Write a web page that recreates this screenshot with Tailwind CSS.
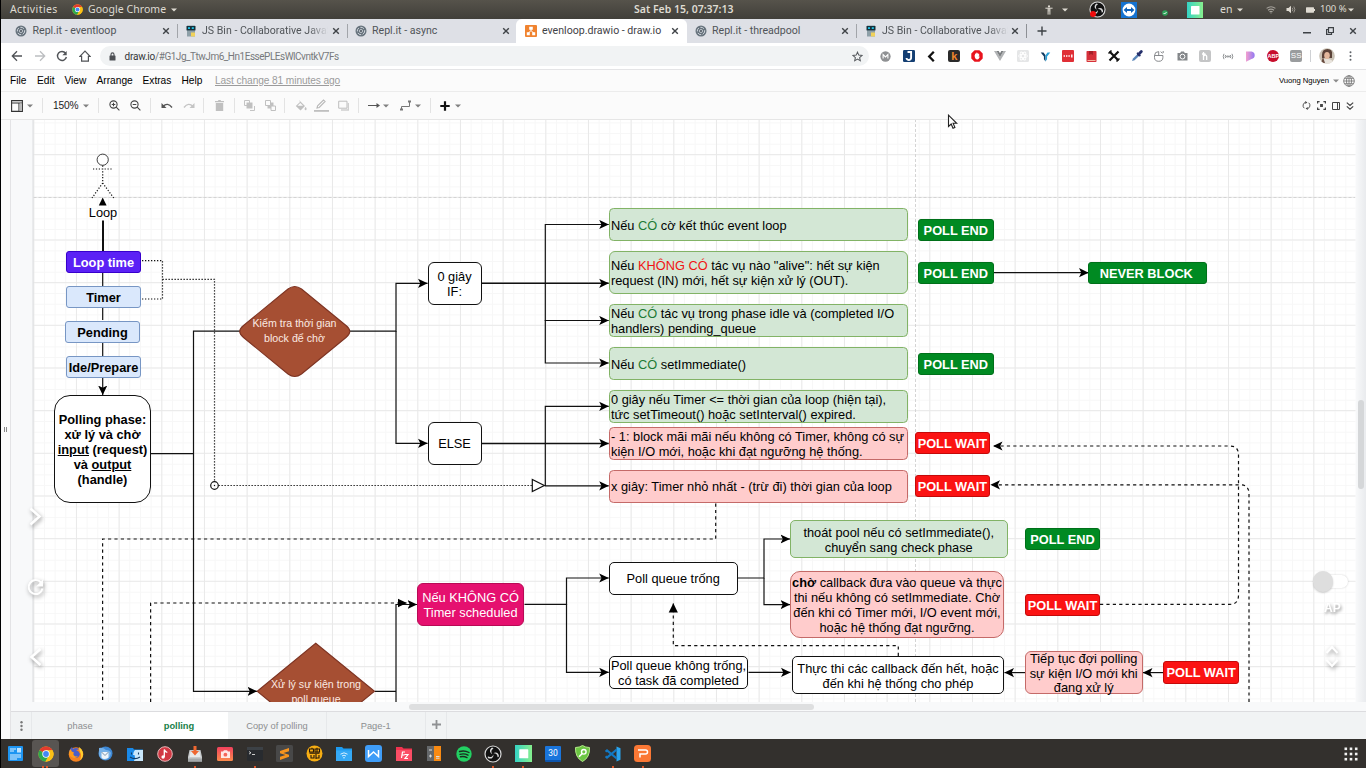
<!DOCTYPE html>
<html lang="vi">
<head>
<meta charset="utf-8">
<title>evenloop.drawio - draw.io</title>
<script src="https://cdn.jsdelivr.net/npm/@tailwindcss/browser@4"></script>
</head>
<body class="w-[1366px] h-[768px] overflow-hidden bg-[#fbfbfb] font-['Liberation_Sans',Arial,sans-serif]">
<svg class="absolute size-0" aria-hidden="true">
  <defs>
    <symbol id="repl" viewBox="0 0 12 12"><circle cx="6" cy="6" r="5.5" fill="#66727c"/><circle cx="6" cy="6" r="3.7" fill="none" stroke="#cfd5dc" stroke-width="1" stroke-dasharray="4 1.4"/><circle cx="6" cy="6" r="1.8" fill="#e5e9ee"/><circle cx="6" cy="6" r="1" fill="#3b4650"/></symbol>
    <symbol id="jsbin" viewBox="0 0 12 12"><rect x="2" y=".5" width="8" height="11" fill="#8ea0a8"/><rect x="1.500" y="1" width="9" height="4.400" fill="#17303b"/><rect x="3" y="2.200" width="2" height="1.800" fill="#20c5e8"/><rect x="6.800" y="2.200" width="2" height="1.800" fill="#20c5e8"/><rect x="6" y="7.500" width="4" height="4" fill="#f1d25a"/></symbol>
    <symbol id="x" viewBox="0 0 8 8"><path d="M1.200 1.200l5.600 5.600M6.800 1.200l-5.600 5.600" stroke="#3f4347" stroke-width="1.400"/></symbol>
    <symbol id="caret" viewBox="0 0 6 4"><path d="M0 .4h6L3 3.600z" fill="currentColor"/></symbol>
    <symbol id="chrome" viewBox="0 0 16 16"><circle cx="8" cy="8" r="7.600" fill="#fbc116"/><path d="M8 8L1.400 4.200A7.600 7.600 0 0 1 14.600 4.300H8z" fill="#e33b2e"/><path d="M8 8L1.400 4.200A7.600 7.600 0 0 0 7.400 15.600L11 9.700z" fill="#2da94f"/><path d="M8 4.300h6.600A7.600 7.600 0 0 1 7.400 15.600L11 9.700z" fill="#fbc116"/><circle cx="8" cy="8" r="3.700" fill="#fff"/><circle cx="8" cy="8" r="2.900" fill="#4387f4"/></symbol>
    <symbol id="obs" viewBox="0 0 18 18"><circle cx="9" cy="9" r="8" fill="#111" stroke="#d8d8d8" stroke-width="1.200"/><g fill="#d8d8d8"><path d="M8.200 2.600C5.400 4 5 7.600 8.400 9.200C6.900 7.200 7 4.600 9.600 3.400z"/><path d="M8.200 2.600C5.400 4 5 7.600 8.400 9.200C6.900 7.200 7 4.600 9.600 3.400z" transform="rotate(120 9 9)"/><path d="M8.200 2.600C5.400 4 5 7.600 8.400 9.200C6.900 7.200 7 4.600 9.600 3.400z" transform="rotate(240 9 9)"/></g></symbol>
    <symbol id="greensq" viewBox="0 0 16 16"><linearGradient id="gs"><stop stop-color="#35d3c4"/><stop offset="1" stop-color="#86ef8d"/></linearGradient><rect width="16" height="16" fill="url(#gs)"/><rect x="4" y="4" width="8.500" height="8.500" rx=".6" fill="#fff"/></symbol>
  </defs>
</svg>
<div class="flex h-full w-full flex-col border-l border-black">

  <!-- system bar -->
  <header class="relative flex h-[19px] shrink-0 items-center bg-linear-to-b from-[#56534b] to-[#413f3a] font-['Noto_Sans','Open_Sans',sans-serif] text-[10.500px] text-[#dfdbd2]">
    <span class="ml-[9px] w-[48px] tracking-[0.400px]">Activities</span>
    <svg class="ml-[14px] size-[11px]"><use href="#chrome"/></svg>
    <span class="ml-[5px] w-[79px] tracking-[0.050px]">Google Chrome</span>
    <svg class="ml-[4px] h-[4px] w-[6px]"><use href="#caret"/></svg>
    <span class="ml-[457px] w-[99px] text-[10.500px] font-semibold whitespace-nowrap">Sat Feb 15, 07:37:13</span>
    <div class="ml-[312px] flex items-center">
      <svg class="h-[10px] w-[8px]" viewBox="0 0 8 10"><circle cx="4" cy="1.400" r="1.100" fill="#dfdbd2"/><path d="M.4 3.200h7.200M4 3v3.500M3.100 3.400V9.600M4.900 3.400V9.600" stroke="#dfdbd2" stroke-width="1"/></svg>
      <svg class="ml-[9px] h-[4px] w-[6px]"><use href="#caret"/></svg>
    </div>
    <div class="relative ml-[20.500px] size-[17px]"><svg class="size-[17px]"><use href="#obs"/></svg><i class="absolute bottom-[1px] left-[1px] size-[6px] rounded-full bg-[#f00d0d]"></i></div>
    <svg class="ml-[15.500px] size-[16px]" viewBox="0 0 16 16"><rect width="16" height="16" fill="#1673d0"/><circle cx="8" cy="8" r="6.400" fill="#fff"/><path d="M2.600 8L6 5v2h4V5l3.400 3L10 11V9H6v2z" fill="#0f62ba"/></svg>
    <svg class="mt-[7px] ml-[25px] size-[6px]" viewBox="0 0 6 6"><circle cx="3" cy="3" r="2.800" fill="#2fa35a"/><path d="M1.600 3l1 1 2-2" stroke="#fff" fill="none" stroke-width=".9"/></svg>
    <svg class="ml-[19px] size-[16px]"><use href="#greensq"/></svg>
    <span class="ml-[17px] w-[13px]">en</span>
    <svg class="ml-[4px] h-[4px] w-[6px]"><use href="#caret"/></svg>
    <svg class="ml-[23px] h-[8px] w-[10px]" viewBox="0 0 10 8" fill="none" stroke="#a5a29b" stroke-width="1.100"><path d="M.6 2.400Q5-1 9.400 2.400M2 4.200Q5 2 8 4.200M3.400 5.900Q5 4.900 6.600 5.900M5 6.600v1"/></svg>
    <svg class="ml-[10px] h-[9px] w-[10px]" viewBox="0 0 10 9"><path d="M.5 3h2L5 .8v7.400L2.500 6h-2z" fill="#dfdbd2"/><path d="M6.300 2.800q1.200 1.700 0 3.400M7.800 1.500q2.200 3 0 6" stroke="#9a968f" fill="none"/></svg>
    <svg class="ml-[10px] h-[6px] w-[9px]" viewBox="0 0 9 6"><rect y=".3" width="8" height="5.400" rx=".6" fill="#dfdbd2"/><rect x="8" y="2" width="1" height="2" fill="#dfdbd2"/></svg>
    <span class="ml-[5px] w-[25px] text-[9.500px] whitespace-nowrap">100 %</span>
    <svg class="ml-[3px] h-[4px] w-[6px]"><use href="#caret"/></svg>
  </header>

  <!-- browser tabs -->
  <nav class="flex h-[24px] shrink-0 items-center bg-[#dee0e6] pl-[6px] font-['Roboto',sans-serif] text-[10.600px] whitespace-nowrap text-[#505458]">
    <div class="flex h-full w-[170px] items-center pl-[8px]"><svg class="size-[12px]"><use href="#repl"/></svg><span class="ml-[5.500px] w-[129.500px]">Repl.it - eventloop</span><svg class="size-[8px]"><use href="#x"/></svg></div>
    <div class="flex h-full w-[169.500px] items-center"><i class="h-[14px] w-px bg-[#a2a5aa]"></i><svg class="ml-[7px] size-[12px]"><use href="#jsbin"/></svg><span class="ml-[5px] w-[130px] overflow-hidden"><span class="block w-[126px] overflow-hidden mask-r-from-85%">JS Bin - Collaborative JavaScript</span></span><svg class="size-[8px]"><use href="#x"/></svg></div>
    <div class="flex h-full w-[169.500px] items-center"><i class="h-[14px] w-px bg-[#a2a5aa]"></i><svg class="ml-[7px] size-[12px]"><use href="#repl"/></svg><span class="ml-[5.500px] w-[129.500px]">Repl.it - async</span><svg class="size-[8px]"><use href="#x"/></svg></div>
    <div class="flex h-full w-[171px] items-center rounded-t-[6px] bg-white pl-[9px] text-[#3f4246]"><svg class="size-[12px]" viewBox="0 0 12 12"><rect width="12" height="12" rx="1" fill="#f0832f"/><path d="M6 4v1.500L3.500 8M6 5.500L8.500 8" stroke="#fff" fill="none"/><path d="M4.200 1.800h3.600v3H4.200zM1.800 7.200h3v3h-3zM7.200 7.200h3v3h-3z" fill="#fff"/></svg><span class="ml-[5px] w-[129px]">evenloop.drawio - draw.io</span><svg class="size-[8px]"><use href="#x"/></svg></div>
    <div class="flex h-full w-[169px] items-center pl-[8px]"><svg class="size-[12px]"><use href="#repl"/></svg><span class="ml-[5px] w-[129px]">Repl.it - threadpool</span><svg class="size-[8px]"><use href="#x"/></svg></div>
    <div class="flex h-full w-[169.500px] items-center"><i class="h-[14px] w-px bg-[#a2a5aa]"></i><svg class="ml-[8px] size-[12px]"><use href="#jsbin"/></svg><span class="ml-[5px] w-[129px] overflow-hidden"><span class="block w-[126px] overflow-hidden mask-r-from-85%">JS Bin - Collaborative JavaScript</span></span><svg class="size-[8px]"><use href="#x"/></svg></div>
    <i class="h-[14px] w-px bg-[#8d9095]"></i>
    <svg class="ml-[10px] size-[10px]" viewBox="0 0 10 10"><path d="M5 .5v9M.5 5h9" stroke="#3d4145" stroke-width="1.400"/></svg>
    <div class="ml-auto flex items-center gap-[15px] pr-[9px]">
      <svg class="mt-[4px] h-[2px] w-[8px]"><rect width="8" height="1.500" fill="#3d4145"/></svg>
      <svg class="size-[8px]" viewBox="0 0 8 8" fill="none" stroke="#3d4145" stroke-width="1.200"><path d="M2.500.600h4.900v4.900H2.500zM2.300 2.500H.6v4.900h4.900V5.700"/></svg>
      <svg class="size-[8px]"><use href="#x"/></svg>
    </div>
  </nav>

  <!-- address bar -->
  <div class="flex h-[27px] shrink-0 items-center border-b border-[#e4e4e6] bg-white">
    <svg class="ml-[10px] size-[12px]" viewBox="0 0 12 12" fill="none" stroke="#505357" stroke-width="1.300"><path d="M11 6H1.500M6 1.300L1.300 6 6 10.700"/></svg>
    <svg class="ml-[11px] size-[12px]" viewBox="0 0 12 12" fill="none" stroke="#bcbec1" stroke-width="1.300"><path d="M1 6h9.500M6 1.300L10.700 6 6 10.700"/></svg>
    <svg class="ml-[10px] size-[12px]" viewBox="0 0 12 12"><path d="M9.600 3.200A4.500 4.500 0 1 0 10.400 7" fill="none" stroke="#505357" stroke-width="1.400"/><path d="M10.700.9v4.300H6.400z" fill="#505357"/></svg>
    <svg class="ml-[11px] size-[12px]" viewBox="0 0 12 12"><path d="M.9 6.400L6 1.200l5.100 5.200H9.400v4.800H2.600V6.400z" fill="none" stroke="#505357" stroke-width="1.200"/></svg>
    <div class="ml-[9px] flex h-[20px] w-[769px] items-center rounded-full bg-[#f1f3f4] font-['Roboto',sans-serif] text-[10px] text-[#77797c]">
      <svg class="ml-[9px] h-[9px] w-[7px]" viewBox="0 0 7 9"><path d="M2 4V2.400a1.500 1.500 0 0 1 3 0V4" fill="none" stroke="#4d5054" stroke-width="1.100"/><rect x=".5" y="3.500" width="6" height="5" rx=".6" fill="#4d5054"/></svg>
      <span class="ml-[8.500px] tracking-[-0.480px]"><span class="tracking-[-0.200px] text-[#333639]">draw.io</span>/#G1Jg_TtwJm6_Hn1EssePLEsWlCvntkV7Fs</span>
      <svg class="mr-[6px] ml-auto size-[11px]" viewBox="0 0 12 12"><path d="M6 1.200l1.400 3.300 3.600.3-2.700 2.400.8 3.500L6 8.800l-3.100 1.900.8-3.500L1 4.800l3.600-.3z" fill="none" stroke="#55585c" stroke-width="1.100"/></svg>
    </div>
    <div class="ml-[5.500px] flex items-center">
      <span class="grid w-[22.800px] place-items-center"><svg class="size-[11px]" viewBox="0 0 12 12"><circle cx="6" cy="6" r="5.600" fill="#8f9193"/><path d="M3.400 8.200V4l2.600 2.500L8.600 4v4.200" stroke="#fff" fill="none" stroke-width="1.200"/></svg></span>
      <span class="grid w-[22.800px] place-items-center"><svg class="size-[12px]" viewBox="0 0 12 12"><rect width="12" height="12" rx="1.200" fill="#143f73"/><path d="M4.500 2h3.600v5.400a2.200 2.200 0 0 1-4.600.6" stroke="#fff" fill="none" stroke-width="1.900"/></svg></span>
      <span class="grid w-[22.800px] place-items-center"><svg class="size-[11px]" viewBox="0 0 11 11"><path d="M7.800.8L3.200 5.500l4.600 4.700" fill="none" stroke="#111" stroke-width="2.300"/></svg></span>
      <span class="mx-[5.400px] grid size-[12px] place-items-center rounded-[2px] bg-[#2b2b2b] text-[11px]/[11px] font-bold text-[#f0862c]">k</span>
      <span class="grid w-[22.800px] place-items-center"><svg class="size-[12px]" viewBox="0 0 12 12"><path d="M3.600.3h4.800l3.300 3.300v4.800l-3.300 3.300H3.600L.3 8.400V3.600z" fill="#e8131d"/><path d="M3.600 5.500q.2 4 2.800 4 1.200 0 2.600-3l-1.200.2V4H4.300z" fill="#fff"/><path d="M4.500 6V3.600M5.600 6V2.700M6.700 6V2.900M7.700 6V3.800" stroke="#fff" stroke-width=".9"/></svg></span>
      <span class="grid w-[22.800px] place-items-center"><svg class="size-[12px]" viewBox="0 0 12 12"><path d="M0 1h2.500L6 7l3.500-6H12L6 11z" fill="#b1b3b5"/><path d="M2.500 1h2.200L6 3.300 7.300 1h2.200L6 7z" fill="#7b7e80"/></svg></span>
      <span class="grid w-[22.800px] place-items-center"><svg class="size-[12px]" viewBox="0 0 12 12"><rect width="12" height="12" rx="1.500" fill="#e5e6e7"/><g fill="none" stroke="#fff" stroke-width=".9"><ellipse cx="6" cy="6" rx="4.500" ry="1.800"/><ellipse cx="6" cy="6" rx="4.500" ry="1.800" transform="rotate(60 6 6)"/><ellipse cx="6" cy="6" rx="4.500" ry="1.800" transform="rotate(120 6 6)"/></g></svg></span>
      <span class="grid w-[22.800px] place-items-center"><svg class="size-[11px]" viewBox="0 0 12 12"><path d="M.8 1.500h3L6 4.500v7L4.300 9V6z" fill="#123c62"/><path d="M11.200 1.500h-3L6 4.500v7L7.700 9V6z" fill="#2a9fd6"/></svg></span>
      <span class="grid w-[22.800px] place-items-center"><svg class="size-[12px]" viewBox="0 0 12 12"><rect width="12" height="12" rx="1" fill="#e02f36"/><path d="M1.600 6h1.400M4 6h1.400M6.400 6h1.400M9.800 4.600v2.800" stroke="#fff" stroke-width="1.400"/></svg></span>
      <span class="grid w-[22.800px] place-items-center"><svg class="size-[11px]" viewBox="0 0 11 11"><rect x=".5" width="10" height="11" rx=".8" fill="#d6303a"/><path d="M3 0h4v4L5 3 3 4z" fill="#a42029"/><rect x="1.500" y="9" width="8" height="1" fill="#f4b6a0"/></svg></span>
      <span class="grid w-[22.800px] place-items-center"><svg class="size-[12px]" viewBox="0 0 12 12"><path d="M1.500 1.500l9 9M10.500 1.500l-9 9" stroke="#111" stroke-width="2.200"/><path d="M.5 3.500l3-3M8.500 11.500l3-3" stroke="#111" stroke-width="1.500"/></svg></span>
      <span class="grid w-[22.800px] place-items-center"><svg class="size-[12px]" viewBox="0 0 12 12"><path d="M1 11l1-2.500 4.500-4.500 1.800 1.800L3.600 10.200z" fill="#5a86b8"/><path d="M6 2.800l3.300 3.300" stroke="#25306b" stroke-width="1.600"/><path d="M7.500 4.500l2.800-3" stroke="#25306b" stroke-width="2.800" stroke-linecap="round"/></svg></span>
      <span class="grid w-[22.800px] place-items-center"><svg class="size-[12px]" viewBox="0 0 12 12" fill="none" stroke="#7c7e81" stroke-width=".9"><path d="M1.500 5.500V7.500a4.200 3.800 0 0 0 8.400 0V5.500zM1.500 5.500Q1.700 1.600 5.700 1.600V5.500M7.600 1.700l2 1.600M10.200 1v2"/></svg></span>
      <span class="grid w-[22.800px] place-items-center"><svg class="h-[10px] w-[11px]" viewBox="0 0 11 10"><path d="M.5 2h2.700l.9-1.500h2.800L7.800 2h2.700v7.500H.5z" fill="#84878a"/><circle cx="5.500" cy="5.600" r="2.400" fill="#84878a" stroke="#fff" stroke-width="1"/></svg></span>
      <span class="mx-[5.400px] grid size-[12px] place-items-center rounded-[2px] bg-[#c4c5c6]"><svg class="size-[8px]" viewBox="0 0 8 8" fill="none" stroke="#fff" stroke-width="1.300"><path d="M2.500 0v8M2.500 4q3-2 3.200.6V8M1 2h3.500"/></svg></span>
      <span class="grid w-[22.800px] place-items-center"><svg class="h-[7px] w-[12px]" viewBox="0 0 12 7" fill="none" stroke="#85888a" stroke-width=".9"><path d="M2 .8Q.4 3.500 2 6.200M10 .8q1.600 2.700 0 5.400M3.600 2Q2.800 3.500 3.600 5M8.400 2q.8 1.500 0 3"/><circle cx="5.200" cy="3.500" r=".7"/><circle cx="7" cy="3.500" r=".7"/></svg></span>
      <span class="grid w-[22.800px] place-items-center"><svg class="size-[11px]" viewBox="0 0 11 11"><linearGradient id="pp" x1="0" x2="1"><stop stop-color="#f3a0cf"/><stop offset="1" stop-color="#9278f2"/></linearGradient><path d="M1 .5h5.500a3.800 3.800 0 0 1 0 7.500L1 10.800z" fill="url(#pp)"/></svg></span>
      <span class="mx-[5.400px] grid size-[12px] place-items-center rounded-full bg-[#c70d2c] text-[5.500px] font-bold text-white">ABP</span>
      <span class="mx-[5.400px] grid size-[12px] place-items-center rounded-[2px] bg-[#9a9c9e] text-[8px]/[10px] text-white">SS</span>
    </div>
    <i class="ml-[2px] h-[12px] w-px bg-[#cfd1d4]"></i>
    <svg class="ml-[8px] size-[16px]" viewBox="0 0 16 16"><clipPath id="av"><circle cx="8" cy="8" r="7.800"/></clipPath><g clip-path="url(#av)"><rect width="16" height="16" fill="#c9c1b4"/><path d="M3 7q0-6 5.500-6T13 7v3H3z" fill="#5b4238"/><ellipse cx="8" cy="7.500" rx="2.800" ry="3.500" fill="#e3b79c"/><path d="M1 16q1-5 7-5t7 5z" fill="#e9e4dd"/><path d="M4 9l2 6H2z" fill="#6a4d40"/></g></svg>
    <svg class="ml-[14px] h-[10px] w-[3px]" viewBox="0 0 3 10" fill="#5f6368"><circle cx="1.500" cy="1.300" r="1"/><circle cx="1.500" cy="5" r="1"/><circle cx="1.500" cy="8.700" r="1"/></svg>
  </div>

  <!-- draw.io menu -->
  <div class="flex h-[22px] shrink-0 items-center border-b border-[#ececec] bg-[#fbfbfb] pl-[9px] text-[10.200px] text-black">
    <span class="w-[27px]">File</span><span class="w-[27.500px]">Edit</span><span class="w-[32px]">View</span><span class="w-[46px]">Arrange</span><span class="w-[39px]">Extras</span><span class="w-[33.500px]">Help</span>
    <span class="text-[10.200px] tracking-[-0.110px] text-[#9b9b9b] underline">Last change 81 minutes ago</span>
    <span class="ml-auto text-[7.700px] tracking-[-0.050px]">Vuong Nguyen</span>
    <svg class="ml-[4px] h-[4px] w-[6px] text-[#8a8a8a]"><use href="#caret"/></svg>
    <svg class="mr-[11px] ml-[4px] size-[12px]" viewBox="0 0 12 12" fill="none" stroke="#7a7a7a" stroke-width=".9"><circle cx="6" cy="6" r="5.300"/><ellipse cx="6" cy="6" rx="2.500" ry="5.300"/><path d="M6 .7v10.600M.7 6h10.600M1.400 3.300h9.200M1.400 8.700h9.200"/></svg>
  </div>

  <!-- draw.io toolbar -->
  <div class="flex h-[28px] shrink-0 items-center border-b border-[#e6e6e6] bg-[#fbfbfb] text-[#808080]">
    <svg class="ml-[10px] size-[12px]" viewBox="0 0 12 12"><path d="M.6.600h10.800v10.800H.6zM.6 3h10.800M8 3v8.400" fill="none" stroke="#333" stroke-width="1.100"/><rect x="8.400" y="3.500" width="2.500" height="7.400" fill="#bbb"/></svg>
    <svg class="ml-[4px] h-[4px] w-[6px]"><use href="#caret"/></svg>
    <i class="ml-[9px] h-[15px] w-px bg-[#e3e3e3]"></i>
    <span class="ml-[10px] w-[26px] text-[10.200px] tracking-[-0.150px] text-[#222]">150%</span>
    <svg class="ml-[4px] h-[4px] w-[6px]"><use href="#caret"/></svg>
    <i class="ml-[9px] h-[15px] w-px bg-[#e3e3e3]"></i>
    <svg class="ml-[10px] size-[11px]" viewBox="0 0 11 11" fill="none" stroke="#444" stroke-width="1.100"><circle cx="4.500" cy="4.500" r="3.600"/><path d="M7.200 7.200l3.200 3.200M2.700 4.500h3.600M4.500 2.700v3.600"/></svg>
    <svg class="ml-[10px] size-[11px]" viewBox="0 0 11 11" fill="none" stroke="#444" stroke-width="1.100"><circle cx="4.500" cy="4.500" r="3.600"/><path d="M7.200 7.200l3.200 3.200M2.700 4.500h3.600"/></svg>
    <i class="ml-[9px] h-[15px] w-px bg-[#e3e3e3]"></i>
    <svg class="ml-[10px] h-[7px] w-[12px]" viewBox="0 0 12 7"><path d="M2 4.500Q6.500-.2 11 5.500" fill="none" stroke="#555" stroke-width="1.400"/><path d="M.5 1v5h5z" fill="#555"/></svg>
    <svg class="ml-[9.500px] h-[7px] w-[12px]" viewBox="0 0 12 7"><path d="M10 4.500Q5.500-.2 1 5.500" fill="none" stroke="#c4c4c4" stroke-width="1.400"/><path d="M11.500 1v5h-5z" fill="#c4c4c4"/></svg>
    <i class="ml-[8px] h-[15px] w-px bg-[#e3e3e3]"></i>
    <svg class="ml-[10px] size-[11px]" viewBox="0 0 11 11" fill="#c0c0c0"><path d="M1 1h2.800L4.500 0h2l.7 1H10v1.200H1zM1.800 3h7.400v8H1.800z"/></svg>
    <i class="ml-[9px] h-[15px] w-px bg-[#e3e3e3]"></i>
    <svg class="ml-[9px] size-[11px]" viewBox="0 0 11 11"><path d="M.5.500h5v5h-5z" fill="none" stroke="#c4c4c4"/><path d="M2.500 2.500h6v6h-6z" fill="#c0c0c0"/><path d="M6 10.500h4.500V6" fill="none" stroke="#c4c4c4"/></svg>
    <svg class="ml-[10.500px] size-[11px]" viewBox="0 0 11 11"><path d="M2.500 2.500h6v6h-6z" fill="#c0c0c0"/><path d="M.5.500h5v5h-5zM6 6h4.500v4.500H6z" fill="#fbfbfb" stroke="#c0c0c0"/></svg>
    <i class="ml-[8px] h-[15px] w-px bg-[#e3e3e3]"></i>
    <svg class="ml-[10px] size-[12px]" viewBox="0 0 12 12"><path d="M4 0l6 6-4.500 4.500L.8 6 5 2" fill="#c0c0c0"/><path d="M2.500 5.700L5.300 3l2.800 2.700z" fill="#fbfbfb"/><path d="M10.600 7.500q1.200 1.700 0 2.600-1.200-.9 0-2.600z" fill="#c0c0c0" stroke="#c0c0c0"/></svg>
    <svg class="ml-[7px] h-[13px] w-[15px]" viewBox="0 0 15 13"><path d="M0 11h15v1.800H0z" fill="#c0c0c0"/><path d="M3 9l.6-2.200L9.500 1l1.600 1.500L5.200 8.500z" fill="none" stroke="#b8b8b8" stroke-width="1.100"/></svg>
    <svg class="ml-[9px] size-[11px]" viewBox="0 0 11 11"><path d="M3 10h7.500V3" fill="none" stroke="#cfcfcf" stroke-width="1.600"/><path d="M.7 1.200h8.300v7H.7z" fill="#fbfbfb" stroke="#bdbdbd"/></svg>
    <i class="ml-[8.500px] h-[15px] w-px bg-[#e3e3e3]"></i>
    <svg class="ml-[9.500px] h-[7px] w-[12px]" viewBox="0 0 12 7"><path d="M0 3.500h9" stroke="#555"/><path d="M8.500 1l3.500 2.500L8.500 6z" fill="#555"/></svg>
    <svg class="ml-[3px] h-[4px] w-[6px]"><use href="#caret"/></svg>
    <svg class="ml-[10.500px] size-[12px]" viewBox="0 0 12 12"><path d="M1.500 9V6.500h8V2" fill="none" stroke="#777"/><path d="M0 9.500h3M8 1.500h3" stroke="#777" stroke-width="1.800"/></svg>
    <svg class="ml-[3px] h-[4px] w-[6px]"><use href="#caret"/></svg>
    <i class="ml-[9px] h-[15px] w-px bg-[#e3e3e3]"></i>
    <svg class="ml-[9px] size-[10px]" viewBox="0 0 10 10"><path d="M5 .3v9.400M.3 5h9.400" stroke="#111" stroke-width="2.200"/></svg>
    <svg class="ml-[5px] h-[4px] w-[6px]"><use href="#caret"/></svg>
    <div class="mr-[12px] ml-auto flex items-center gap-[6px]">
      <svg class="size-[9px]" viewBox="0 0 10 10" fill="none" stroke="#444" stroke-width="1"><path d="M2.500 8A3.800 3.800 0 0 1 3.800 1.500M7.500 2a3.800 3.800 0 0 1-1.300 6.500"/><path d="M3.600 0v3.400L6 1.600zM6.400 6.600V10L4 8.400z" fill="#444" stroke="none"/></svg>
      <svg class="size-[9px]" viewBox="0 0 9 9" fill="none" stroke="#444" stroke-width="1.200"><path d="M.6 2.600v-2h2M6.400.600h2v2M8.400 6.400v2h-2M2.600 8.400h-2v-2"/><path d="M3.700 3.700h1.600v1.600H3.700z" fill="#444"/></svg>
      <svg class="size-[8px]" viewBox="0 0 8 8" fill="none" stroke="#444"><path d="M.5.500h7v7h-7z"/><path d="M5.500.5v7"/></svg>
      <svg class="size-[8px]" viewBox="0 0 8 8" fill="none" stroke="#444" stroke-width="1.200"><path d="M.8.600L4 3.400 7.200.6M.8 4.400L4 7.200l3.200-2.800"/></svg>
    </div>
  </div>

  <!-- workspace -->
  <main class="flex min-h-0 flex-1">
    <div class="flex w-[9px] shrink-0 items-center justify-end pr-[3px]"><i class="h-[5px] w-[3px] border-x border-[#888]"></i></div>
    <div class="flex min-w-0 flex-1 flex-col border-l border-[#e3e3e5] bg-[#f8f9fa]">
      <div class="relative h-[582px] shrink-0 overflow-hidden">
        <!-- drawing surface: origin shifted so shapes use window coordinates -->
        <div class="absolute -top-[120px] -left-[11px] h-[768px] w-[1366px] text-[12.800px]/[14.930px] text-black [&>div]:pt-[3px]">
          <svg class="absolute inset-0" width="1366" height="768" viewBox="0 0 1366 768" fill="none" stroke="#111" stroke-width="1.200">
            <defs>
              <pattern id="minor" x="33.300" y="154.400" width="10.667" height="10.667" patternUnits="userSpaceOnUse"><path d="M0 .5h10.667M.5 0v10.667" stroke="#f7f7f7" stroke-width="1"/></pattern>
              <pattern id="major" x="33.300" y="154.100" width="42.667" height="42.667" patternUnits="userSpaceOnUse"><path d="M0 .5h42.667M.5 0v42.667" stroke="#e9e9e9" stroke-width="1"/></pattern>
              <marker id="arr" markerUnits="userSpaceOnUse" markerWidth="10" markerHeight="10" refX="9.500" refY="5" orient="auto"><path d="M0 .4L9.600 5 0 9.600 2.300 5z" fill="#000" stroke="none"/></marker>
              <marker id="blk" markerUnits="userSpaceOnUse" markerWidth="10" markerHeight="10" refX="9" refY="5" orient="auto"><path d="M0 .4L9.300 5 0 9.600z" fill="#000" stroke="none"/></marker>
            </defs>
            <g stroke="none"><rect x="33" y="110" width="1322.500" height="600" fill="#fff"/><rect x="33" y="110" width="1322.500" height="600" fill="url(#minor)"/><rect x="33" y="110" width="1322.500" height="600" fill="url(#major)"/></g>
            <path d="M33.500 197.500H1355M915.500 119V702" stroke="#d4d4d4" stroke-width="1" stroke-dasharray="3 2"/>
            <path d="M33 119V702" stroke="#dcdde0" stroke-width="1"/>
            <g stroke-dasharray="1.200 1.700"><circle cx="102.700" cy="159.700" r="5.600" stroke-dasharray="none" stroke-width=".8"/><path d="M102.700 165.500V183M93 169h20M102.700 183L92 198M102.700 183l11 15"/></g>
            <path d="M102.700 197.500l-3.900 8h7.800z" fill="#000" stroke="none"/>
            <path d="M103 220.500V251" stroke-width="2"/>
            <path d="M102.700 273v14M102.700 308v12M102.700 342v14"/>
            <path d="M102.700 377V395" marker-end="url(#arr)"/>
            <path d="M151 453.700h42.500M240 331.200H193.500V691.300H257" marker-end="url(#arr)"/>
            <g marker-end="url(#arr)">
              <path d="M350 331.200H396V283.300H427.500"/><path d="M396 331V443.300H427.500"/>
              <path d="M545.300 283.300V224.500H608.700"/><path d="M481.500 283.300H608.700" stroke-width="1.500"/><path d="M545.300 283V320.500H608.700"/><path d="M545.300 320V363H608.700"/>
              <path d="M545.300 443V406.300H608.700"/><path d="M481.500 443.400H608.700" stroke-width="1.500"/><path d="M545.300 443V485.800H608.700"/>
              <path d="M994 272.700H1088.500"/>
              <path d="M375 691.300H396M396 702V604.500H417"/>
              <path d="M524.500 604.300h42V578H608.700"/><path d="M566.500 604V672.300H608.700"/>
              <path d="M738 578h26V539H790"/><path d="M764 578v26.600H790"/><path d="M748.500 672.400H790.500"/>
              <path d="M1025 672.600H1004.500"/><path d="M1163 672.600H1143"/>
            </g>
            <path d="M142 260.700h20.500V299H142M162.500 279.300H214.500V481.500M218.500 485.500H532" stroke-dasharray="1.300 1.700"/>
            <circle cx="214.500" cy="485.500" r="3.800"/><circle cx="214.500" cy="485.500" r=".7" fill="#111" stroke="none"/>
            <path d="M532.300 479.500v12l12-6z" fill="#fff"/>
            <g stroke-dasharray="3.200 3.200">
              <path d="M715.700 503.500V539H102.600V702"/>
              <path d="M150.600 702V603H406.500" marker-end="url(#blk)"/>
              <path d="M898.300 656V645.700H673.300V603.500" marker-end="url(#blk)"/>
              <path d="M1100 604.300H1230Q1238.500 604.300 1238.500 595V455Q1238.500 446 1230 446H993" marker-end="url(#arr)"/>
              <path d="M1249 702V494Q1249 484.800 1240 484.800H990.500" marker-end="url(#arr)"/>
            </g>
            <g fill="#a64f33" stroke="#7d3322" stroke-width="1.100">
              <path d="M288 289Q294.700 284 301.500 289L346 325.500Q353.500 331.500 346 337.500L301.500 374Q294.700 379 288 374L243.500 337.500Q236 331.500 243.500 325.500z"/>
              <path d="M315.700 643.300L374.500 691.300 315.700 739 257.200 691.300z"/>
            </g>
          </svg>

          <div class="absolute top-[203px] left-[73px] w-[60px] text-center">Loop</div>

          <div class="absolute top-[251px] left-[65.700px] flex h-[22px] w-[75.700px] items-center justify-center rounded-[3px] border border-[#3700cc] bg-[#5b21f5] font-bold text-white">Loop time</div>
          <div class="absolute top-[286px] left-[65.700px] flex h-[22px] w-[75.700px] items-center justify-center rounded-[3px] border border-[#7796c4] bg-[#dae8fc] font-bold">Timer</div>
          <div class="absolute top-[320.500px] left-[64.700px] flex h-[22px] w-[75.700px] items-center justify-center rounded-[3px] border border-[#7796c4] bg-[#dae8fc] font-bold">Pending</div>
          <div class="absolute top-[355.500px] left-[65.700px] flex h-[22px] w-[75.700px] items-center justify-center rounded-[3px] border border-[#7796c4] bg-[#dae8fc] font-bold whitespace-nowrap">Ide/Prepare</div>
          <div class="absolute top-[395px] left-[54px] flex h-[107.500px] w-[97px] items-center justify-center rounded-[16px] border border-[#111] bg-white text-center font-bold whitespace-nowrap"><p>Polling phase:<br>xử lý và chờ<br><u>input</u> (request)<br>và <u>output</u><br>(handle)</p></div>

          <p class="absolute top-[316px] left-[239px] w-[111px] text-center text-[10.670px]/[15px] text-[#fbe9e2]">Kiểm tra thời gian<br>block để chờ</p>
          <p class="absolute top-[677px] left-[257px] w-[118px] text-center text-[10.670px]/[15px] text-[#fbe9e2]">Xử lý sự kiện trong<br>poll queue</p>

          <div class="absolute top-[261.500px] left-[427.500px] flex h-[43.500px] w-[54px] items-center justify-center rounded-[6px] border border-[#111] bg-white text-center">0 giây<br>IF:</div>
          <div class="absolute top-[421.500px] left-[427.500px] flex h-[43.500px] w-[54px] items-center justify-center rounded-[6px] border border-[#111] bg-white">ELSE</div>

          <div class="absolute top-[208px] left-[608.700px] flex h-[33px] w-[299.500px] items-center rounded-[4.500px] border border-[#82b366] bg-[#d3e7d5] pl-[1.300px] whitespace-nowrap"><p>Nếu <span class="text-[#1d7a34]">CÓ</span> cờ kết thúc event loop</p></div>
          <div class="absolute top-[251px] left-[608.700px] flex h-[43px] w-[299.500px] items-center rounded-[6px] border border-[#82b366] bg-[#d3e7d5] pl-[1.300px] whitespace-nowrap"><p>Nếu <span class="text-[#f01414]">KHÔNG CÓ</span> tác vụ nào "alive": hết sự kiện<br>request (IN) mới, hết sự kiện xử lý (OUT).</p></div>
          <div class="absolute top-[304px] left-[608.700px] flex h-[33px] w-[299.500px] items-center rounded-[4.500px] border border-[#82b366] bg-[#d3e7d5] pl-[1.300px] whitespace-nowrap"><p>Nếu <span class="text-[#1d7a34]">CÓ</span> tác vụ trong phase idle và (completed I/O<br>handlers) pending_queue</p></div>
          <div class="absolute top-[347px] left-[608.700px] flex h-[33px] w-[299.500px] items-center rounded-[4.500px] border border-[#82b366] bg-[#d3e7d5] pl-[1.300px] whitespace-nowrap"><p>Nếu <span class="text-[#1d7a34]">CÓ</span> setImmediate()</p></div>
          <div class="absolute top-[389.700px] left-[608.700px] flex h-[33px] w-[299.500px] items-center rounded-[4.500px] border border-[#82b366] bg-[#d3e7d5] pl-[1.300px] whitespace-nowrap"><p>0 giây nếu Timer &lt;= thời gian của loop (hiện tại),<br>tức setTimeout() hoặc setInterval() expired.</p></div>
          <div class="absolute top-[427px] left-[608.700px] flex h-[33px] w-[299.500px] items-center rounded-[4.500px] border border-[#c46a68] bg-[#ffcccc] pl-[1.300px] whitespace-nowrap"><p>- 1: block mãi mãi nếu không có Timer, không có sự<br>kiện I/O mới, hoặc khi đạt ngưỡng hệ thống.</p></div>
          <div class="absolute top-[469.700px] left-[608.700px] flex h-[33px] w-[299.500px] items-center rounded-[4.500px] border border-[#c46a68] bg-[#ffcccc] pl-[1.300px] whitespace-nowrap"><p>x giây: Timer nhỏ nhất - (trừ đi) thời gian của loop</p></div>

          <div class="absolute top-[218.500px] left-[918px] flex h-[22px] w-[75.700px] items-center justify-center rounded-[3px] border border-[#00701a] bg-[#008a22] font-bold text-white">POLL END</div>
          <div class="absolute top-[261.500px] left-[918px] flex h-[22px] w-[75.700px] items-center justify-center rounded-[3px] border border-[#00701a] bg-[#008a22] font-bold text-white">POLL END</div>
          <div class="absolute top-[352.500px] left-[918px] flex h-[22px] w-[75.700px] items-center justify-center rounded-[3px] border border-[#00701a] bg-[#008a22] font-bold text-white">POLL END</div>
          <div class="absolute top-[261.500px] left-[1088.300px] flex h-[22px] w-[119px] items-center justify-center rounded-[3px] border border-[#00701a] bg-[#008a22] pr-[3px] font-bold text-white">NEVER BLOCK</div>
          <div class="absolute top-[432.300px] left-[914.500px] flex h-[22px] w-[75.700px] items-center justify-center rounded-[3px] border border-[#c40a0a] bg-[#fb1313] font-bold whitespace-nowrap text-white">POLL WAIT</div>
          <div class="absolute top-[475px] left-[914.500px] flex h-[22px] w-[75.700px] items-center justify-center rounded-[3px] border border-[#c40a0a] bg-[#fb1313] font-bold whitespace-nowrap text-white">POLL WAIT</div>

          <div class="absolute top-[582.700px] left-[416.700px] flex h-[43.500px] w-[107.700px] items-center justify-center rounded-[6px] border border-[#b80a55] bg-[#e5106f] text-center whitespace-nowrap text-white">Nếu KHÔNG CÓ<br>Timer scheduled</div>
          <div class="absolute top-[561.500px] left-[608.700px] flex h-[33px] w-[129px] items-center justify-center rounded-[5px] border border-[#111] bg-white">Poll queue trống</div>
          <div class="absolute top-[656px] left-[608.700px] flex h-[33px] w-[139.700px] items-center justify-center rounded-[5px] border border-[#111] bg-white text-center whitespace-nowrap">Poll queue không trống,<br>có task đã completed</div>
          <div class="absolute top-[520px] left-[790px] flex h-[38px] w-[217.500px] items-center justify-center rounded-[5px] border border-[#82b366] bg-[#d3e7d5] text-center whitespace-nowrap">thoát pool nếu có setImmediate(),<br>chuyển sang check phase</div>
          <div class="absolute top-[571px] left-[790px] flex h-[67px] w-[214px] items-center justify-center rounded-[10px] border border-[#c46a68] bg-[#ffcccc] text-center whitespace-nowrap"><p><b>chờ</b> callback đưa vào queue và thực<br>thi nếu không có setImmediate. Chờ<br>đến khi có Timer mới, I/O event mới,<br>hoặc hệ thống đạt ngưỡng.</p></div>
          <div class="absolute top-[656px] left-[792px] flex h-[38px] w-[212px] items-center justify-center rounded-[5px] border border-[#111] bg-white text-center whitespace-nowrap">Thực thi các callback đến hết, hoặc<br>đến khi hệ thống cho phép</div>
          <div class="absolute top-[528px] left-[1024.700px] flex h-[22px] w-[75.700px] items-center justify-center rounded-[3px] border border-[#00701a] bg-[#008a22] font-bold text-white">POLL END</div>
          <div class="absolute top-[593.500px] left-[1024.700px] flex h-[22px] w-[75.700px] items-center justify-center rounded-[3px] border border-[#c40a0a] bg-[#fb1313] font-bold whitespace-nowrap text-white">POLL WAIT</div>
          <div class="absolute top-[650.500px] left-[1024.700px] flex h-[43px] w-[118px] items-center justify-center rounded-[6px] border border-[#c46a68] bg-[#ffcccc] text-center whitespace-nowrap"><p class="pt-px">Tiếp tục đợi polling<br>sự kiện I/O mới khi<br>đang xử lý</p></div>
          <div class="absolute top-[661px] left-[1163.300px] flex h-[22.500px] w-[75.700px] items-center justify-center rounded-[3px] border border-[#c40a0a] bg-[#fb1313] font-bold whitespace-nowrap text-white">POLL WAIT</div>

          <!-- recorder overlay -->
          <svg class="absolute inset-0 drop-shadow-[1px_2px_2px_rgba(0,0,0,0.4)]" width="1366" height="768" viewBox="0 0 1366 768" fill="none" stroke="#fff" stroke-width="2.500">
            <path d="M30.500 508.500l9 8-9 8M40.500 649l-9 8 9 8"/>
            <path d="M41 582.500A7 7 0 1 0 42.500 588.500" stroke-width="2"/><path d="M43 579.500v7h-7z" fill="#fff" stroke="none"/>
            <path d="M1326.500 653l5.500-6 5.500 6M1326.500 660l5.500 6 5.500-6" stroke-width="2"/>
          </svg>
          <div class="absolute top-[575px] left-[1324px] h-[13px] w-[24px] rounded-full bg-white shadow-[0_0_2px_rgba(0,0,0,0.2)]"></div>
          <div class="absolute top-[571px] left-[1312.500px] size-[20.500px] rounded-full bg-[#dedede] shadow-[0_1px_2px_rgba(0,0,0,0.2)]"></div>
          <div class="absolute top-[598px] left-[1324px] text-[12px] text-white drop-shadow-[1px_2px_1.500px_rgba(0,0,0,0.4)]"><b>AP</b></div>
          <div class="absolute top-[110px] left-[1355.500px] h-[620px] w-[10.500px] bg-linear-to-r from-[#f8f9fa] to-[#e9ebee]"></div>
          <div class="absolute top-[400px] left-[1358px] h-[89px] w-[6px] rounded-full bg-[#d5d7d9]"></div>
        </div>
      </div>
      <div class="h-[9px] shrink-0 pt-[2px] pl-[398px]"><div class="h-[6px] w-[405px] rounded-full bg-[#dedfe0]"></div></div>

      <!-- page tabs -->
      <footer class="flex flex-1 items-center border-t border-[#dcdcdf] bg-[#f1f3f4] text-[9.300px] text-[#8c8e90]">
        <span class="grid h-full w-[21px] place-items-center border-r border-[#e6e8ea]"><svg class="h-[10px] w-[3px]" viewBox="0 0 3 10" fill="#777"><circle cx="1.500" cy="1.300" r="1.200"/><circle cx="1.500" cy="5" r="1.200"/><circle cx="1.500" cy="8.700" r="1.200"/></svg></span>
        <span class="grid h-full w-[98px] place-items-center pt-[2px] pr-[2px]">phase</span>
        <span class="grid h-full w-[98px] place-items-center bg-white pt-[2px] font-bold text-[#188048]">polling</span>
        <span class="grid h-full w-[99px] place-items-center border-r border-[#e6e8ea] pt-[2px]">Copy of polling</span>
        <span class="grid h-full w-[98.500px] place-items-center border-r border-[#e6e8ea] pt-[2px]">Page-1</span>
        <span class="grid h-full w-[21px] place-items-center border-r border-[#e6e8ea] pb-[3px] pl-px"><svg class="size-[9px]" viewBox="0 0 9 9"><path d="M4.500 0v9M0 4.500h9" stroke="#8f9193" stroke-width="1.800"/></svg></span>
      </footer>
    </div>
  </main>

  <!-- dock -->
  <div class="flex h-[29px] shrink-0 items-center bg-[#33302d]">
    <span class="grid w-[29.850px] place-items-center"><svg class="size-[15px]" viewBox="0 0 15 15"><rect width="15" height="15" rx="1" fill="#1d95f2"/><path d="M2 3h6M2 5h4M2 9h11M2 11h11M2 13h7" stroke="#dff1ff" stroke-width="1.200"/><rect x="9" y="2" width="4" height="4.500" fill="#bfe3ff"/></svg></span>
    <span class="relative mx-[1.300px] grid h-[27px] w-[27.200px] place-items-center rounded-[3px] bg-[#585552]"><svg class="size-[16px]"><use href="#chrome"/></svg><i class="absolute bottom-[-1px] left-[10px] flex gap-[2px]"><b class="size-[2px] bg-[#d9572b]"></b><b class="size-[2px] bg-[#d9572b]"></b></i></span>
    <span class="grid w-[29.850px] place-items-center"><svg class="size-[16px]" viewBox="0 0 16 16"><circle cx="8" cy="8.500" r="7.300" fill="#f58220"/><path d="M1 6Q2 2 4 1l1 2q3-2 6 0Q10 4 8 4q3 1 4 4-1 4-4.500 4T4 8.500z" fill="#4a5fc9"/><path d="M1 7q0-3 2-4 0 3 3 3.500Q4.500 8 6 9.500T10 10q-2 3-5.500 1.500T1 7z" fill="#ff9b1a"/><path d="M11 1q4 3 4 7t-3 6q2-4 .5-7T11 1z" fill="#ffd02e"/></svg></span>
    <span class="grid w-[29.850px] place-items-center"><svg class="size-[16px]" viewBox="0 0 16 16"><circle cx="8.500" cy="7.500" r="7" fill="#3d87d3"/><path d="M2 2q4-1 7 2 4 0 5 3-1 6-6 7-5-1-6-5z" fill="#74b0e8"/><path d="M4.500 6h7v5.500q-5 3-7 0z" fill="#eef4fa"/><path d="M4.500 6L8 9.500 11.500 6" fill="none" stroke="#7d93a8"/></svg></span>
    <span class="grid w-[29.850px] place-items-center"><svg class="h-[14px] w-[16px]" viewBox="0 0 16 14"><path d="M0 1h6l1 1.500h9V14H0z" fill="#1989e8"/><path d="M8 3h8v11H7Q9 11 7.500 8H6Q6 5 8 3z" fill="#c9e7fb"/><path d="M4.500 5.500v2M11.500 5.500v2M3 10q5 3.300 10 0" stroke="#143c63" fill="none" stroke-width="1.100"/></svg></span>
    <span class="grid w-[29.850px] place-items-center"><svg class="size-[16px]" viewBox="0 0 16 16"><circle cx="8" cy="8" r="7.300" fill="#d13843" stroke="#f3c7c7" stroke-width=".9"/><path d="M7.300 11V3.500q.5 2 3 3" fill="none" stroke="#fff" stroke-width="1.300"/><circle cx="6.100" cy="11" r="1.700" fill="#fff"/></svg></span>
    <span class="relative grid h-[29px] w-[29.850px] place-items-center"><svg class="size-[16px]" viewBox="0 0 16 16"><path d="M2.500 4h11l1.500 7v4.500H1V11z" fill="#c8cbcc"/><path d="M3.500 5.500h9L13.500 11h-11z" fill="#e8eaea"/><path d="M1 12.500h14v3H1z" fill="#a4a8aa"/><path d="M6.500 0h3v5H12L8 9.500 4 5h2.500z" fill="#ef6730"/></svg><i class="absolute bottom-0 size-[2px] bg-[#d9572b]"></i></span>
    <span class="grid w-[29.850px] place-items-center"><svg class="h-[14px] w-[16px]" viewBox="0 0 16 14"><linearGradient id="cm" x2="0" y2="1"><stop stop-color="#f2415d"/><stop offset="1" stop-color="#fb8b4c"/></linearGradient><rect width="16" height="14" rx="1.500" fill="url(#cm)"/><path d="M4 4.500h2l1-1.200h3l1 1.200h2V11H4z" fill="#fff" opacity=".85"/><circle cx="8.400" cy="7.700" r="1.900" fill="#f4655a"/></svg></span>
    <span class="relative grid h-[29px] w-[29.850px] place-items-center"><svg class="h-[14px] w-[16px]" viewBox="0 0 16 14"><rect width="16" height="14" rx="1" fill="#282b2f"/><rect width="16" height="3" fill="#3c4146"/><path d="M2 4.500l2 1.300-2 1.300M5 7.500h3" stroke="#ddd" fill="none" stroke-width=".9"/></svg><i class="absolute bottom-0 size-[2px] bg-[#d9572b]"></i></span>
    <span class="grid w-[29.850px] place-items-center"><svg class="size-[17px]" viewBox="0 0 17 17"><rect width="17" height="17" rx="1.500" fill="#484848"/><path d="M4 6l9-3v3.300L7.500 8 13 9.800v2L4 15v-3.300L9.500 10 4 8.200z" fill="#f7941e"/></svg></span>
    <span class="grid w-[29.850px] place-items-center"><svg class="size-[17px]" viewBox="0 0 17 17"><circle cx="8.500" cy="8.500" r="8" fill="#f7ae13"/><path d="M3.500 4h4v3h-4zM9 4h4.500v3H9zM3.500 8.300h10M5 10v3h3v-3M10 9v5M13 10v3h-3M6 2.800V4M11 2.800V7" fill="none" stroke="#26190a" stroke-width="1.100"/></svg></span>
    <span class="grid w-[29.850px] place-items-center"><svg class="h-[14px] w-[16px]" viewBox="0 0 16 14"><path d="M0 0h6l1.500 1.500H16V14H0z" fill="#1d9bf0"/><path d="M0 3.500h16V14H0z" fill="#35a9f6"/><path d="M4.500 7.200q3.500-2.800 7 0M6 9q2-1.600 4 0" stroke="#d9f0ff" fill="none"/><circle cx="8" cy="10.700" r=".8" fill="#d9f0ff"/></svg></span>
    <span class="grid w-[29.850px] place-items-center"><svg class="size-[17px]" viewBox="0 0 17 17"><rect width="17" height="17" rx="3" fill="#3f9df8"/><path d="M3.500 5v6.500L8.500 7l5 4.500V5" fill="none" stroke="#fff" stroke-width="1.500"/></svg></span>
    <span class="grid w-[29.850px] place-items-center"><svg class="h-[14px] w-[16px]" viewBox="0 0 16 14"><path d="M0 0h6l1.500 1.500H16V14H0z" fill="#f0334f"/><path d="M0 3h16v11H0z" fill="#fb4d65"/><path d="M5.500 11l1-6H9M5.500 8h3M8.500 7.500h3.500l-3 4h3" fill="none" stroke="#fff" stroke-width="1.200"/></svg></span>
    <span class="grid w-[29.850px] place-items-center"><svg class="h-[15px] w-[14px]" viewBox="0 0 14 15"><rect width="7" height="15" fill="#65686b"/><rect x="7" width="7" height="15" fill="#f98a12"/><path d="M2 4h3M2 10h3M3.500 8.500v3M9 10.500h3.500M9 12.200h3.500" stroke="#ddd"/></svg></span>
    <span class="grid w-[29.850px] place-items-center"><svg class="size-[16px]" viewBox="0 0 16 16"><circle cx="8" cy="8" r="7.700" fill="#22d062"/><path d="M3.500 5.500q5-1.500 9.500 1M4 8.300q4.300-1.200 8 .9M4.500 10.800q3.500-.8 6.500.8" fill="none" stroke="#1c2b20" stroke-width="1.400" stroke-linecap="round"/></svg></span>
    <span class="relative grid h-[29px] w-[29.850px] place-items-center"><svg class="size-[18px]"><use href="#obs"/></svg><i class="absolute bottom-0 size-[2px] bg-[#d9572b]"></i></span>
    <span class="relative grid h-[29px] w-[29.850px] place-items-center"><svg class="size-[17px]"><use href="#greensq"/></svg><i class="absolute bottom-0 size-[2px] bg-[#d9572b]"></i></span>
    <span class="grid w-[29.850px] place-items-center"><span class="grid size-[16px] place-items-center rounded-[1px] border-b-2 border-[#0d55ad] bg-[#1a75dc] font-['Roboto',sans-serif] text-[8.500px]/[14px] text-white">30</span></span>
    <span class="grid w-[29.850px] place-items-center"><svg class="size-[17px]" viewBox="0 0 17 17"><path d="M8.500.500q3 2 7 2 .5 10-7 14-7.500-4-7-14 4 0 7-2z" fill="#6cc644" stroke="#b2ea86"/><circle cx="9.800" cy="6.800" r="2.300" fill="none" stroke="#fff" stroke-width="1.400"/><path d="M8.200 8.500L5 11.800" stroke="#fff" stroke-width="1.600"/></svg></span>
    <span class="relative grid h-[29px] w-[29.850px] place-items-center"><svg class="size-[16px]" viewBox="0 0 16 16"><path d="M11.500.500L15.500 2.300v11.400l-4 1.800z" fill="#2aa4ee"/><path d="M11.800 3.500L2 11.500.5 10.300M11.800 12.500L2 4.500.5 5.700" fill="none" stroke="#1279c4" stroke-width="2.200"/></svg><i class="absolute bottom-0 size-[2px] bg-[#d9572b]"></i></span>
    <span class="relative grid h-[29px] w-[29.850px] place-items-center"><svg class="size-[17px]" viewBox="0 0 17 17"><rect width="17" height="17" rx="3.500" fill="#fb7835"/><path d="M4 5h7.500q2 0 2 2t-2 2H6v3.500" fill="none" stroke="#fff" stroke-width="1.500"/></svg><i class="absolute bottom-0 size-[2px] bg-[#d9572b]"></i></span>
    <svg class="mr-[8px] ml-auto size-[14px]" viewBox="0 0 14 14" fill="#f2f2f2"><rect x=".5" y=".5" width="2.600" height="2.600"/><rect x="5.700" y=".5" width="2.600" height="2.600"/><rect x="10.900" y=".5" width="2.600" height="2.600"/><rect x=".5" y="5.700" width="2.600" height="2.600"/><rect x="5.700" y="5.700" width="2.600" height="2.600"/><rect x="10.900" y="5.700" width="2.600" height="2.600"/><rect x=".5" y="10.900" width="2.600" height="2.600"/><rect x="5.700" y="10.900" width="2.600" height="2.600"/><rect x="10.900" y="10.900" width="2.600" height="2.600"/></svg>
  </div>
</div>
<svg class="absolute top-[114px] left-[947px] h-[16px] w-[11px]" viewBox="0 0 11 16"><path d="M1.500 1.200v11.300l2.700-2.500 1.800 4.200 1.900-.8-1.800-4.100h3.600z" fill="#fff" stroke="#222" stroke-width="1.100"/></svg>
</body>
</html>
